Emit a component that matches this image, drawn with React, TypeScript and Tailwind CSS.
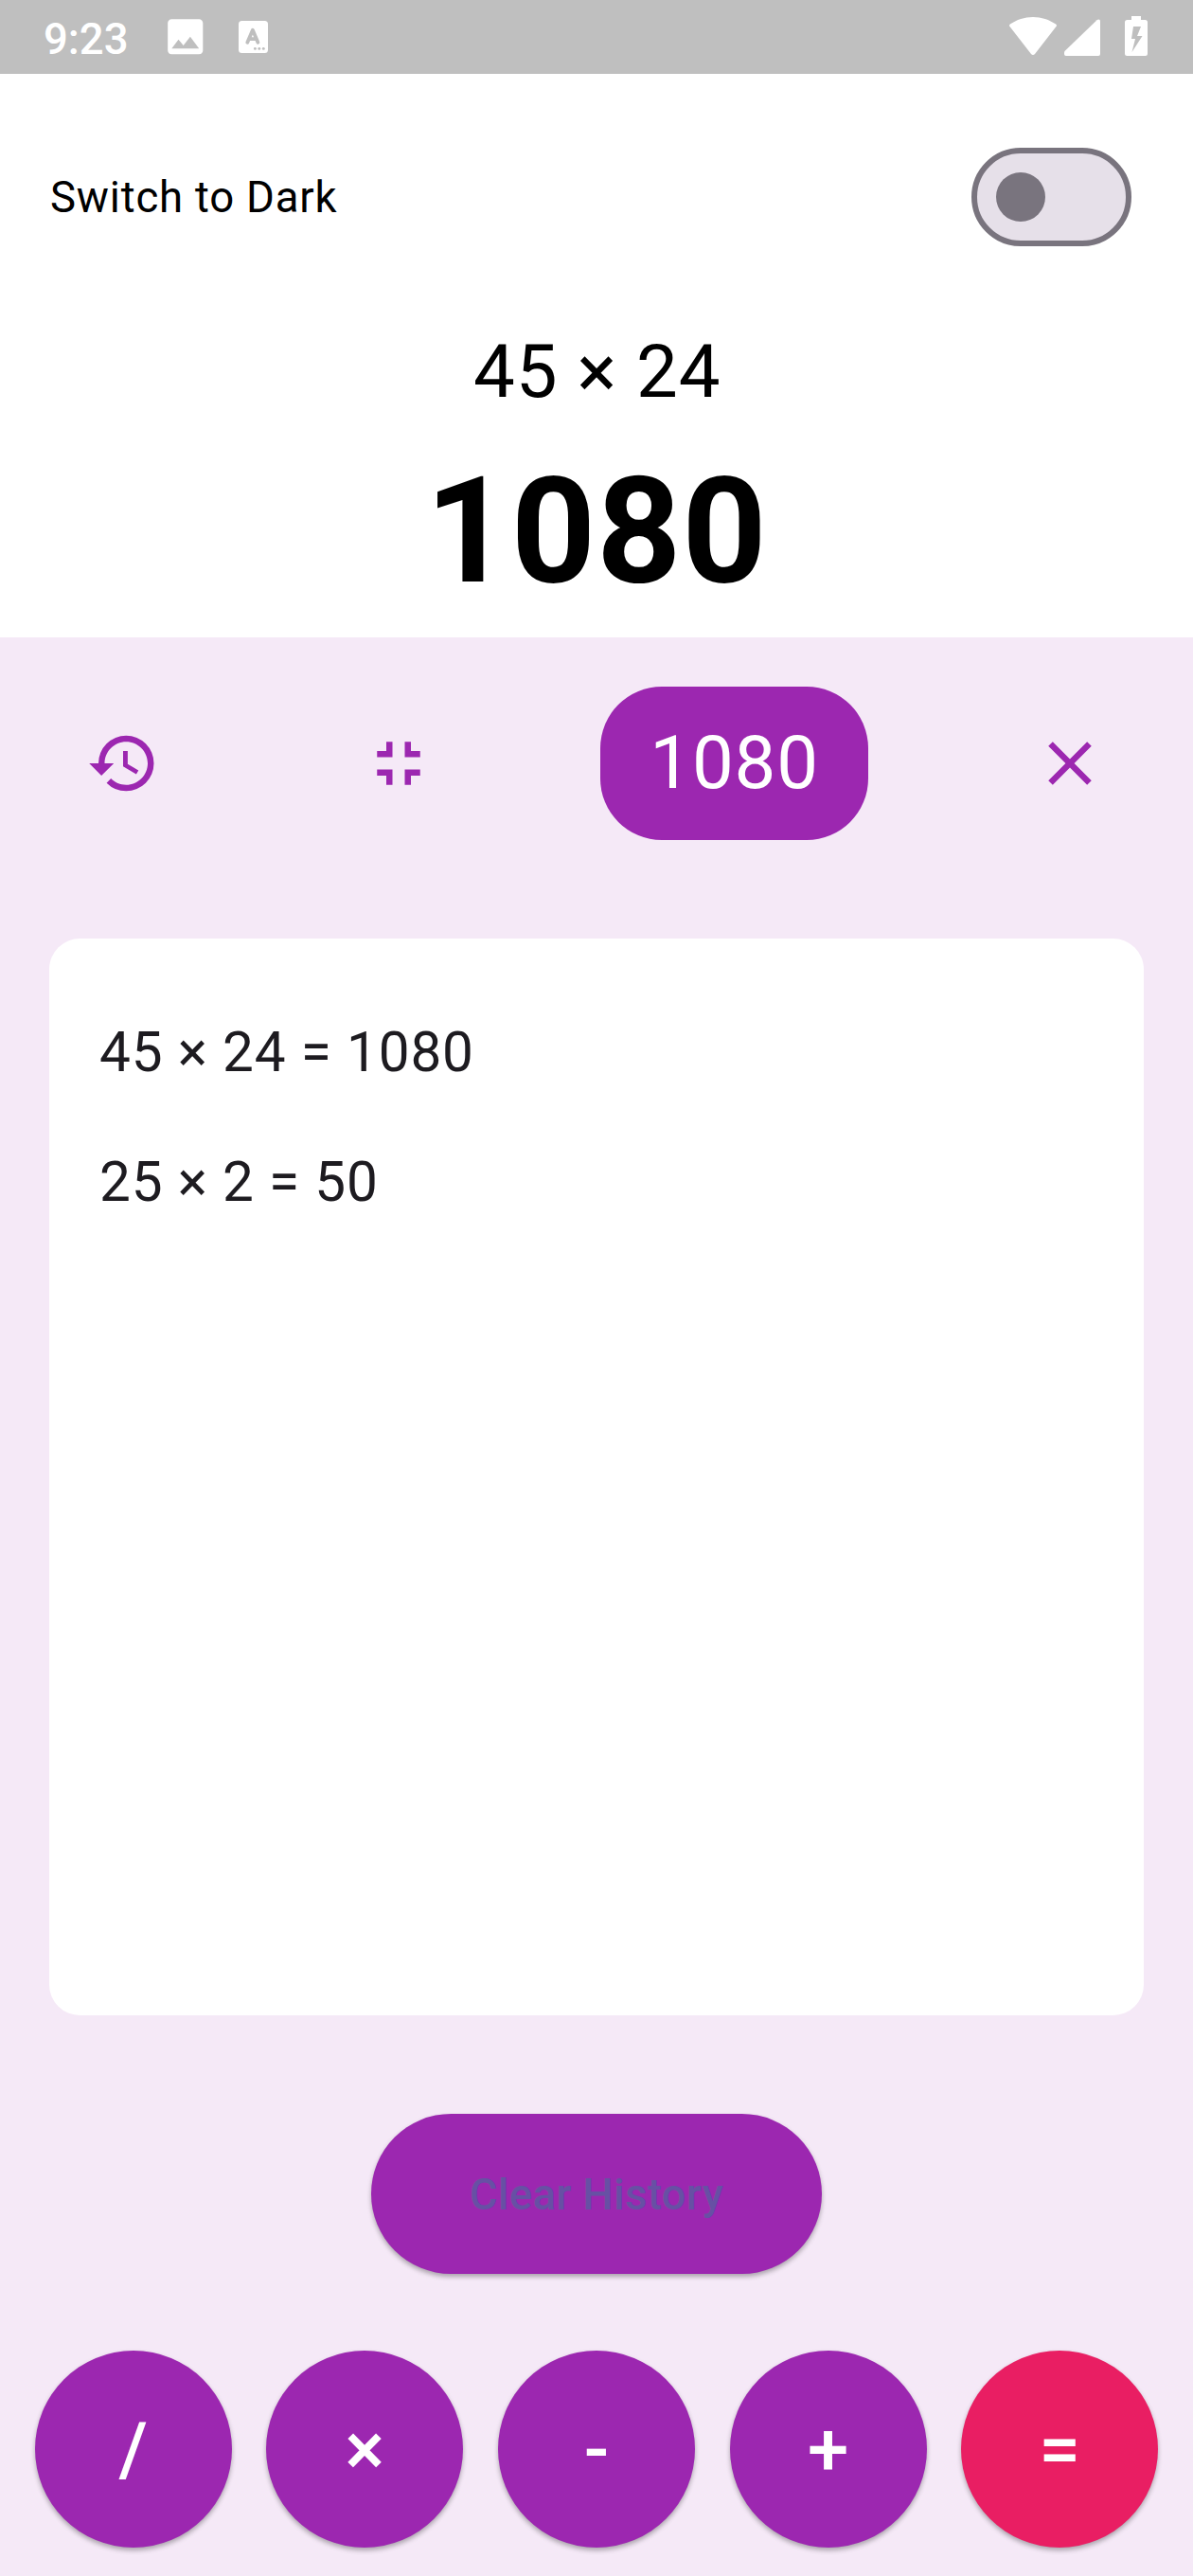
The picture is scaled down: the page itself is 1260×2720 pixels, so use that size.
import { MdHistory, MdFullscreenExit, MdClose, MdImage } from 'react-icons/md';

const history = ['45 × 24 = 1080', '25 × 2 = 50'];
const operators = ['/', '×', '-', '+', '='];

function StatusBar() {
  return (
    <header className="flex h-[78px] shrink-0 items-center justify-between bg-[#bfbfbf] pl-[46px] pr-[48px] text-white">
      <div className="flex items-center">
        <span className="w-[124.5px] pt-[5px] text-[45.5px] leading-[54px] font-medium">9:23</span>
        <MdImage className="size-[49.5px]" />
        <svg className="ml-[32px] h-[34px] w-[31px]" viewBox="0 0 31 34">
          <rect width="31" height="34" rx="3.5" fill="#fff" />
          <path d="M9.3 22.7 14.900 9.700 20.400 22.700M11.500 19.200h7" fill="none" stroke="#bfbfbf" strokeWidth="3.8" strokeLinecap="round" strokeLinejoin="round" />
          <g fill="#bfbfbf">
            <circle cx="17.4" cy="29.4" r="1.45" />
            <circle cx="21.8" cy="29.4" r="1.45" />
            <circle cx="26.3" cy="29.4" r="1.45" />
          </g>
        </svg>
      </div>
      <div className="flex items-center">
        <svg className="h-[42px] w-[50px]" viewBox="0 0 50 42">
          <path d="M.7 10.2C-.2 9.400-.2 8.400.8 7.600 7.700 2.800 16 0 25 0s17.300 2.800 24.200 7.600c1 .8 1 1.800.1 2.600L27 38.900c-1.200 1.300-2.800 1.300-4 0Z" fill="#fff" />
        </svg>
        <svg className="ml-[8px] h-[42px] w-[38px]" viewBox="0 0 38 42">
          <path d="M38 4.500V39q0 2-2 2H1.800Q0 41 0 39v-1.500q0-1 1-2L34.500 3.200Q35.500 2.500 36.500 2.500 38 2.500 38 4.500Z" fill="#fff" />
        </svg>
        <svg className="mb-[2px] ml-[26px] h-[42px] w-[24px]" viewBox="0 0 24 42">
          <path fillRule="evenodd" d="M7 0h10v4h4.500Q24 4 24 6.500v33q0 2.500-2.500 2.500h-19Q0 42 0 39.500v-33Q0 4 2.500 4H7ZM9 11 7 24h4L7.500 38 18.500 21H13L17 11Z" fill="#fff" />
        </svg>
      </div>
    </header>
  );
}

export default function App() {
  return (
    <main className="flex h-[2720px] w-[1260px] flex-col overflow-hidden bg-white font-[Roboto,sans-serif] text-black">
      <StatusBar />
      <section className="flex h-[595px] shrink-0 flex-col items-center">
        <div className="mt-[78px] flex h-[104px] w-full items-center justify-between pl-[53px] pr-[65px]">
          <span className="text-[45.5px] leading-[65px] tracking-[0.8125px]">Switch to Dark</span>
          <button role="switch" aria-checked="false" aria-label="Dark theme" className="flex h-[104px] w-[169px] items-center rounded-full border-[6.5px] border-[#79747e] bg-[#e6e0e9] pl-[20px]">
            <span className="size-[52px] rounded-full bg-[#79747e]" />
          </button>
        </div>
        <p className="mt-[79px] pl-[1.5px] text-[78px] leading-[108px] tracking-[0.8125px]">45 × 24</p>
        <p className="mt-[23px] text-[156px] leading-[182px] font-bold tracking-[0.8125px]">1080</p>
      </section>

      <section className="flex flex-1 flex-col items-center bg-[#f5e9f7]">
        <div className="mt-[51.75px] flex h-[162.5px] w-full items-center justify-between px-[52px] text-[#9c27b0]">
          <button aria-label="History" className="flex size-[156px] items-center justify-center"><MdHistory className="size-[78px]" /></button>
          <button aria-label="Collapse" className="flex size-[156px] items-center justify-center"><MdFullscreenExit className="size-[78px]" /></button>
          <span className="flex h-[162.5px] items-center rounded-[65px] bg-[#9c27b0] px-[52px] text-[78px] leading-none tracking-[0.8125px] text-white">1080</span>
          <button aria-label="Close" className="flex size-[156px] items-center justify-center"><MdClose className="size-[78px]" /></button>
        </div>

        <ul className="mt-[103.75px] h-[1137.3px] w-[1156px] rounded-[32.5px] bg-white pl-[53px] pt-[78px] text-[58.5px] leading-[85px] tracking-[0.8125px] text-[#1d1b20]">
          {history.map((item) => (
            <li key={item} className="mb-[52px]">{item}</li>
          ))}
        </ul>

        <button className="mt-[104px] flex h-[169px] w-[476px] items-center justify-center rounded-full bg-[#9c27b0] pt-[2px] text-[45.5px] font-medium tracking-[0.325px] text-[#6750a4] shadow-[0_3px_5px_rgba(0,0,0,0.3)]">
          Clear History
        </button>

        <div className="mt-[81.2px] flex w-full justify-evenly">
          {operators.map((op) => (
            <button
              key={op}
              className={
                'flex size-[208px] items-center justify-center rounded-full text-[78px] font-medium text-white shadow-[0_3px_5px_rgba(0,0,0,0.3)] ' +
                (op === '=' ? 'bg-[#e91e63]' : 'bg-[#9c27b0]')
              }
            >
              {op}
            </button>
          ))}
        </div>
      </section>
    </main>
  );
}
